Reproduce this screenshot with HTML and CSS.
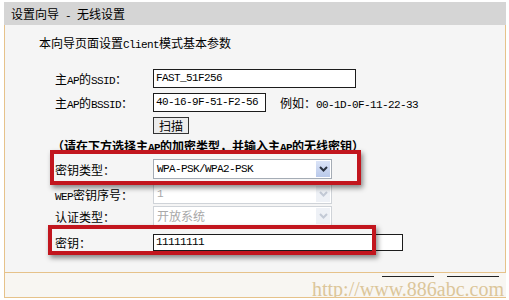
FILE: index.html
```html
<!DOCTYPE html>
<html>
<head>
<meta charset="utf-8">
<link rel="stylesheet" href="styles.css">
</head>
<body>
<div class="page">
  <div class="head">设置向导<span class="en"> - </span>无线设置</div>
  <div class="panel">
    <p class="intro">本向导页面设置<span class="en">Client</span>模式基本参数</p>
    <div class="form">
      <div class="row h24"><span class="lbl">主<span class="en">AP</span>的<span class="en">SSID</span>：</span><div class="box w-ssid">FAST_51F256</div></div>
      <div class="row h25"><span class="lbl">主<span class="en">AP</span>的<span class="en">BSSID</span>：</span><div class="box w-bssid">40-16-9F-51-F2-56</div><span class="hint">例如：<span class="en">00-1D-0F-11-22-33</span></span></div>
      <div class="row h20"><span class="lbl"></span><div class="btn">扫描</div></div>
      <div class="row h20"><span class="note">（请在下方选择主<span class="en">AP</span>的加密类型，并输入主<span class="en">AP</span>的无线密钥）</span></div>
      <div class="row h28"><span class="lbl">密钥类型：</span><div class="sel"><span class="val en">WPA-PSK/WPA2-PSK</span><span class="arr"><svg width="9" height="6" viewBox="0 0 9 6"><path d="M1 1 L4.5 4.5 L8 1" fill="none" stroke="#2b3340" stroke-width="2"/></svg></span></div></div>
      <div class="row h22"><span class="lbl"><span class="en">WEP</span>密钥序号：</span><div class="sel off"><span class="val en">1</span><span class="arr"><svg width="9" height="6" viewBox="0 0 9 6"><path d="M1 1 L4.5 4.5 L8 1" fill="none" stroke="#c3cad6" stroke-width="2"/></svg></span></div></div>
      <div class="row h22"><span class="lbl">认证类型：</span><div class="sel off"><span class="val">开放系统</span><span class="arr"><svg width="9" height="6" viewBox="0 0 9 6"><path d="M1 1 L4.5 4.5 L8 1" fill="none" stroke="#c3cad6" stroke-width="2"/></svg></span></div></div>
      <div class="row h30"><span class="lbl">密钥：</span><div class="box w-key">11111111</div></div>
    </div>
  </div>
  <div class="foot"><span class="bline"></span><span class="bline"></span></div>
  <div class="mark mark1"></div>
  <div class="mark mark2"></div>
  <div class="wm">http://www.886abc.com</div>
</div>
</body>
</html>
```
FILE: styles.css
```css
* { box-sizing: border-box; }
body { margin: 0; background: #fff; font: 12px "Noto Sans CJK SC", sans-serif; color: #000; }
.en { font-family: "Liberation Mono", monospace; font-size: 11px; letter-spacing: -0.6px; white-space: pre; }
.page { position: relative; margin: 2px 0 0 4px; width: 502px; }
.head { height: 23px; line-height: 23px; background: #d5d5d5; padding-left: 7px; }
.panel { height: 248px; background: #f5f5f5; border: 1px solid #e6c28a; border-top: 0; padding: 11px 0 0 34px; }
.intro { margin: 0 0 14px 0; line-height: 14px; }
.form { margin-left: 16px; }
.row { display: flex; align-items: center; }
.h20 { height: 20px; } .h22 { height: 22px; } .h24 { height: 24px; } .h25 { height: 25px; } .h28 { height: 28px; } .h30 { height: 30px; }
.lbl { width: 98px; flex: none; }
.box { height: 19px; border: 1px solid #1c1c1c; background: #fff; padding-left: 2px; font: 11px "Liberation Mono", monospace; letter-spacing: -0.6px; line-height: 17px; }
.w-ssid { width: 203px; }
.w-bssid { width: 113px; }
.w-key { width: 250px; height: 17px; line-height: 15px; }
.hint { margin-left: 14px; }
.btn { width: 36px; height: 17px; border: 1px solid #333; background: #ececec; text-align: center; line-height: 15px; }
.note { font-weight: bold; margin-left: -3px; }
.sel { width: 179px; height: 20px; border: 1px solid #a5acb5; background: #fff; display: flex; }
.sel .val { flex: 1; padding-left: 3px; line-height: 18px; }
.sel .arr { width: 16px; display: flex; align-items: center; justify-content: center; background: linear-gradient(#dbe4f7, #b9c9ea); border: 1px solid #fff; }
.sel.off { border-color: #cfd3d8; }
.sel.off .val { color: #a8a8a8; }
.sel.off .arr { background: #eef1f6; }
.foot { height: 25px; border-left: 1px solid #e6c28a; border-bottom: 1px solid #e6c28a; background: #f8f6f2; display: flex; justify-content: flex-end; gap: 13px; padding: 3px 7px 0 0; }
.bline { width: 52px; height: 1px; background: #222; }
.mark { position: absolute; border: 4px solid #c2161e; box-shadow: 2px 3px 5px rgba(0,0,0,0.45); }
.mark1 { left: 46px; top: 148px; width: 311px; height: 35px; }
.mark2 { left: 44px; top: 223px; width: 328px; height: 30px; }
.wm { position: absolute; right: 2px; top: 276px; font: 20px "Liberation Serif", serif; color: #dcc69a; line-height: 22px; }
```
